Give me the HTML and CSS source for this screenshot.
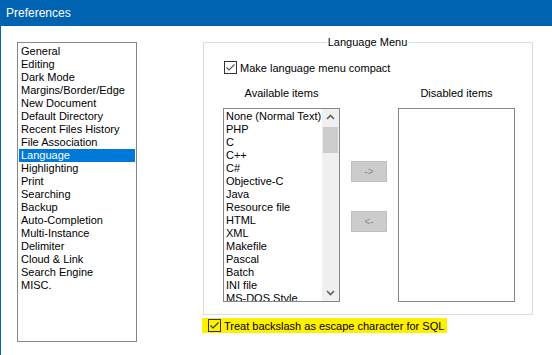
FILE: index.html
```html
<!DOCTYPE html>
<html lang="en">
<head>
  <meta charset="UTF-8" />
  <title>Preferences</title>
  <meta name="viewport" content="width=device-width, initial-scale=1" />
  <link rel="stylesheet" href="styles.css">
</head>
<body>
  <div class="window">
    <div class="titlebar">Preferences</div>
    <div class="content">
      <ul class="navlist">
        <li>General</li>
        <li>Editing</li>
        <li>Dark Mode</li>
        <li>Margins/Border/Edge</li>
        <li>New Document</li>
        <li>Default Directory</li>
        <li>Recent Files History</li>
        <li>File Association</li>
        <li class="selected">Language</li>
        <li>Highlighting</li>
        <li>Print</li>
        <li>Searching</li>
        <li>Backup</li>
        <li>Auto-Completion</li>
        <li>Multi-Instance</li>
        <li>Delimiter</li>
        <li>Cloud &amp; Link</li>
        <li>Search Engine</li>
        <li>MISC.</li>
      </ul>

      <div class="panel">
        <div class="group">
          <div class="legend">Language Menu</div>
          <label class="check compact">
            <svg class="box" width="13" height="13" viewBox="0 0 13 13">
              <rect x="0.5" y="0.5" width="12" height="12" fill="#fff" stroke="#333"/>
              <path d="M2.5 6.5 L5 9 L10.5 3.5" fill="none" stroke="#555" stroke-width="1.1"/>
            </svg>
            Make language menu compact
          </label>

          <div class="lists">
            <div class="col">
              <div class="col-title">Available items</div>
              <div class="listbox">
                <ul class="items">
                  <li>None (Normal Text)</li>
                  <li>PHP</li>
                  <li>C</li>
                  <li>C++</li>
                  <li>C#</li>
                  <li>Objective-C</li>
                  <li>Java</li>
                  <li>Resource file</li>
                  <li>HTML</li>
                  <li>XML</li>
                  <li>Makefile</li>
                  <li>Pascal</li>
                  <li>Batch</li>
                  <li>INI file</li>
                  <li>MS-DOS Style</li>
                </ul>
                <div class="scrollbar">
                  <svg class="arrow" width="17" height="17" viewBox="0 0 17 17">
                    <path d="M5 10 L8.5 6.5 L12 10" fill="none" stroke="#606060" stroke-width="1.6"/>
                  </svg>
                  <div class="track"><div class="thumb"></div></div>
                  <svg class="arrow" width="17" height="17" viewBox="0 0 17 17">
                    <path d="M5 7 L8.5 10.5 L12 7" fill="none" stroke="#606060" stroke-width="1.6"/>
                  </svg>
                </div>
              </div>
            </div>

            <div class="movers">
              <button class="move" disabled>-&gt;</button>
              <button class="move" disabled>&lt;-</button>
            </div>

            <div class="col">
              <div class="col-title">Disabled items</div>
              <div class="listbox"></div>
            </div>
          </div>
        </div>

        <label class="check sql">
          <svg class="box" width="13" height="13" viewBox="0 0 13 13">
            <rect x="0.5" y="0.5" width="12" height="12" fill="none" stroke="#333"/>
            <path d="M2.5 6.5 L5 9 L10.5 3.5" fill="none" stroke="#333" stroke-width="1.1"/>
          </svg>
          Treat backslash as escape character for SQL
        </label>
      </div>
    </div>
  </div>
</body>
</html>
```

FILE: styles.css
```css
:root {
  --title-bg: #0063b1;
  --select: #0078d7;
  --list-border: #828790;
  --group-border: #dcdcdc;
  --marker: #fff000;
}
body {
  margin: 0;
  padding: 0;
  font-family: "Liberation Sans", Arial, sans-serif;
  font-size: 11px;
  color: #000;
  background: #fff;
}
.window {
  height: 355px;
  border-left: 1px solid var(--title-bg);
  box-sizing: border-box;
}
.titlebar {
  height: 26px;
  line-height: 26px;
  padding-left: 5px;
  background: var(--title-bg);
  color: #fff;
  font-size: 12px;
}
.content {
  display: flex;
}
.navlist {
  list-style: none;
  margin: 16px 0 0 16px;
  padding: 2px 1px;
  width: 120px;
  height: 300px;
  box-sizing: border-box;
  border: 1px solid var(--list-border);
}
.navlist li {
  height: 13px;
  line-height: 13px;
  padding-left: 2px;
  white-space: nowrap;
}
.navlist li.selected {
  background: var(--select);
  color: #fff;
}
.panel {
  margin: 16px 0 0 66px;
}
.group {
  width: 330px;
  height: 273px;
  box-sizing: border-box;
  border: 1px solid var(--group-border);
  padding: 0 0 0 19px;
}
.legend {
  width: fit-content;
  margin: -8px auto 0;
  padding: 0 1px;
  line-height: 14px;
  background: #fff;
  position: relative;
  left: -10px;
}
.check {
  display: flex;
  align-items: center;
  gap: 3px;
  height: 13px;
  white-space: nowrap;
}
.check .box {
  flex: none;
}
.compact {
  margin: 12px 0 0 1px;
}
.lists {
  display: flex;
  margin-top: 12px;
}
.col {
  width: 117px;
}
.col-title {
  text-align: center;
  line-height: 14px;
  margin-bottom: 8px;
}
.listbox {
  height: 194px;
  box-sizing: border-box;
  border: 1px solid var(--list-border);
  display: flex;
  overflow: hidden;
}
.items {
  list-style: none;
  margin: 0;
  padding: 1px 0 0 2px;
  flex: 1;
  overflow: hidden;
}
.items li {
  height: 13px;
  line-height: 13px;
  white-space: nowrap;
}
.scrollbar {
  width: 17px;
  flex: none;
  display: flex;
  flex-direction: column;
  background: #f0f0f0;
}
.arrow {
  display: block;
  flex: none;
}
.track {
  flex: 1;
}
.thumb {
  margin: 1px 1px 0;
  height: 26px;
  background: #cdcdcd;
}
.movers {
  width: 36px;
  margin: 75px 11px 0;
  display: flex;
  flex-direction: column;
  gap: 29px;
}
.move {
  width: 36px;
  height: 21px;
  padding: 0;
  background: #cccccc;
  border: 1px solid #bfbfbf;
  color: #8a8a8a;
  font-family: "Liberation Sans", Arial, sans-serif;
  font-size: 10px;
}
.sql {
  width: fit-content;
  height: 15px;
  margin: 3px 0 0 -1px;
  padding: 0 3px 0 6px;
  background: var(--marker);
}
```
